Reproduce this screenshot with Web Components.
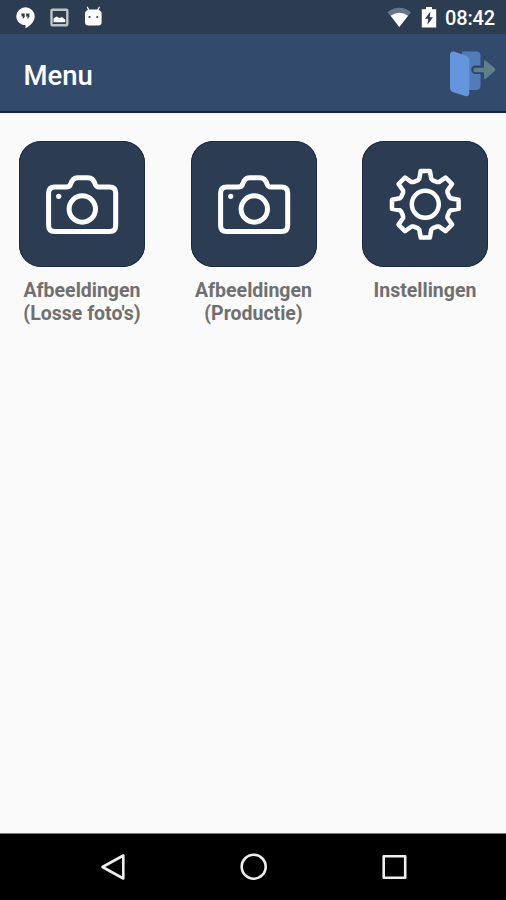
<!DOCTYPE html>
<html lang="nl">
<head>
<meta charset="utf-8">
<title>Menu</title>
<style>
html,body{margin:0;height:100%}
body{font-family:Roboto,"Liberation Sans",sans-serif;background:#fafafa;overflow:hidden}
</style>
</head>
<body>
<menu-screen></menu-screen>
<script>
const define = (name, html) => customElements.define(name, class extends HTMLElement {
  constructor() {
    super();
    this.attachShadow({mode: 'open'}).innerHTML = html;
  }
});

define('status-bar', `
<style>
:host{display:flex;height:34px;box-sizing:border-box;background:#2c3d52;color:#fff;align-items:center;justify-content:space-between;padding:0 11px 0 15px}
div{display:flex;align-items:center}
svg{display:block}
.time{font-size:20px;line-height:34px;font-weight:500;letter-spacing:-.15px;padding-top:2px}
</style>
<div>
  <svg width="90" height="34" viewBox="15 0 90 34">
    <path d="M25.500 7.300a9.200 9 0 0 0-9.200 8.900c0 5 4 8.800 9.200 8.800v3.200c5-2.400 9.200-6.600 9.200-12a9.200 9 0 0 0-9.200-8.900z" fill="#fff"/>
    <path d="M21.500 13.500h3.200v3.200l-1.300 1.800h-1l.7-1.900h-1.600zM26.200 13.500h3.200v3.200l-1.300 1.800h-1l.7-1.900h-1.600z" fill="#2c3d52"/>
    <rect x="51.500" y="9.700" width="15.800" height="15.600" rx="1" fill="none" stroke="#bcc3cb" stroke-width="2.400"/>
    <path d="M53.500 22.300v-3.800l3-2 3 1.500 2.500-1 3.300 2.800v2.500z" fill="#fff"/>
    <path d="M85 13.500q0-2.500 3-3.500l-1.400-3 1-.6 1.700 3.100h8l1.700-3.100 1 .6-1.400 3q3 1 3 3.500v8.500q0 3.500-3.500 3.500h-9.600q-3.500 0-3.500-3.500z" fill="#fff"/>
    <circle cx="89.500" cy="17" r="1.100" fill="#2c3d52"/><circle cx="97.300" cy="17" r="1.100" fill="#2c3d52"/>
  </svg>
</div>
<div>
  <svg width="58" height="34" viewBox="387 0 58 34">
    <path d="M387.500 12.200Q399.300 3.500 411 12.200L399.300 27z" fill="#66778a"/>
    <path d="M390.700 15.700Q399.300 9.800 408 15.700L399.300 27z" fill="#fff"/>
    <path d="M426 7h6v2.200h4.200V27.500h-14.400V9.200h4.200z" fill="#fff"/>
    <path d="M430.500 11.500l-5.500 7.300h3.200l-.8 6 5.600-7.600h-3.300z" fill="#2c3d52"/>
  </svg>
  <span class="time">08:42</span>
</div>`);

define('exit-icon', `
<style>:host{display:block;padding-top:3px}svg{display:block}</style>
<svg width="50" height="52" viewBox="448 48 50 52">
  <path d="M454 51.500h22q4.500 0 4.500 4.500v29.500q0 4.500-4.500 4.500h-14V51.500z" fill="#507db9"/>
  <path d="M475.500 65.500h6v8.500h-6a4.200 4.200 0 0 1 0-8.500z" fill="#2d4564"/>
  <path d="M475.500 67.700H484v-6q0-2.500 2-.8l8.700 7.200q1.500 1.400 0 2.800l-8.700 7.500q-2 1.500-2-1v-5.200h-8.500a2.200 2.200 0 0 1 0-4.500z" fill="#5f7f8b"/>
  <path d="M450 55q0-4 4-3.500l12 4.300q3.300 1.200 3.300 4.500v32.500q0 4.200-4 3.200l-12-3.700q-3.300-1.200-3.300-4.500z" fill="#6596dd"/>
</svg>`);

define('app-bar', `
<style>
:host{display:flex;height:79px;box-sizing:border-box;background:#324b6c;border-bottom:2px solid #151d5c;align-items:center;justify-content:space-between;padding:0 8px 0 23.500px;color:#fff}
h1{margin:0;font-size:27.500px;line-height:32px;font-weight:500;padding-top:6px}
</style>
<h1><slot></slot></h1><exit-icon></exit-icon>`);

define('camera-icon', `
<style>:host,svg{display:block}</style>
<svg width="126" height="126" viewBox="0 0 126 126" fill="none" stroke="#fff" stroke-width="5" stroke-linejoin="round">
  <path d="M35.600 46H47.500Q50.500 46 51.500 43.500C52.800 39.500 55 36.800 58.500 36.800H69C72.500 36.800 75 39.500 76.300 43.500Q77.200 46 80 46H90.700Q96.700 46 96.700 52V84.400Q96.700 90.400 90.700 90.400H35.600Q29.600 90.400 29.600 84.400V52Q29.600 46 35.600 46z"/>
  <circle cx="63.300" cy="68" r="13.200"/>
  <circle cx="39.700" cy="55.300" r="2.600" fill="#fff" stroke="none"/>
</svg>`);

const gear = [];
for (let i = 0; i < 8; i++) {
  const a = i * Math.PI / 4, c = Math.cos(a), s = Math.sin(a);
  for (const [x, y] of [[-7.6, -23.9], [-6, -25.4], [-4.6, -33.3], [4.6, -33.3], [6, -25.4], [7.6, -23.9]])
    gear.push((63.3 + x * c - y * s).toFixed(2) + ' ' + (63.3 + x * s + y * c).toFixed(2));
}
define('gear-icon', `
<style>:host,svg{display:block}</style>
<svg width="126" height="126" viewBox="0 0 126 126" fill="none" stroke="#fff" stroke-width="4.500" stroke-linejoin="round">
  <path d="M${gear.join('L')}z"/>
  <circle cx="63.300" cy="63.300" r="13.500"/>
</svg>`);

define('menu-tile', `
<style>
:host{display:flex;flex-direction:column;align-items:center;width:126px}
.box{width:126px;height:126px;border-radius:22px;background:#2c3d53;box-shadow:inset 0 0 0 1px #182a4a}
.label{margin-top:12px;font-size:19.500px;line-height:23px;font-weight:700;color:#707070;text-align:center}
</style>
<div class="box"><slot name="icon"></slot></div>
<div class="label"><slot></slot></div>`);

define('nav-bar', `
<style>
:host{display:flex;height:67px;box-sizing:border-box;background:#000;border-top:1px solid #777;align-items:center;justify-content:space-between;padding:0 98px 1px 99px}
svg{display:block}
</style>
<svg width="28" height="30" fill="none" stroke="#eee" stroke-width="2.600" stroke-linejoin="round"><path d="M3.500 15L24.300 3.500V26.500z"/></svg>
<svg width="30" height="30" fill="none" stroke="#eee" stroke-width="2.600"><circle cx="14.700" cy="14.700" r="12"/></svg>
<svg width="28" height="30" fill="none" stroke="#eee" stroke-width="2.600" stroke-linejoin="round"><rect x="3.700" y="4.200" width="21.500" height="21.500"/></svg>`);

define('menu-screen', `
<style>
:host{display:flex;flex-direction:column;height:900px;width:506px;background:#fafafa}
main{flex:1;display:flex;align-items:flex-start;gap:45.500px;padding:28px 0 0 19px}
</style>
<status-bar></status-bar>
<app-bar>Menu</app-bar>
<main>
  <menu-tile><camera-icon slot="icon"></camera-icon>Afbeeldingen<br>(Losse foto's)</menu-tile>
  <menu-tile><camera-icon slot="icon"></camera-icon>Afbeeldingen<br>(Productie)</menu-tile>
  <menu-tile><gear-icon slot="icon"></gear-icon>Instellingen</menu-tile>
</main>
<nav-bar></nav-bar>`);
</script>
</body>
</html>
